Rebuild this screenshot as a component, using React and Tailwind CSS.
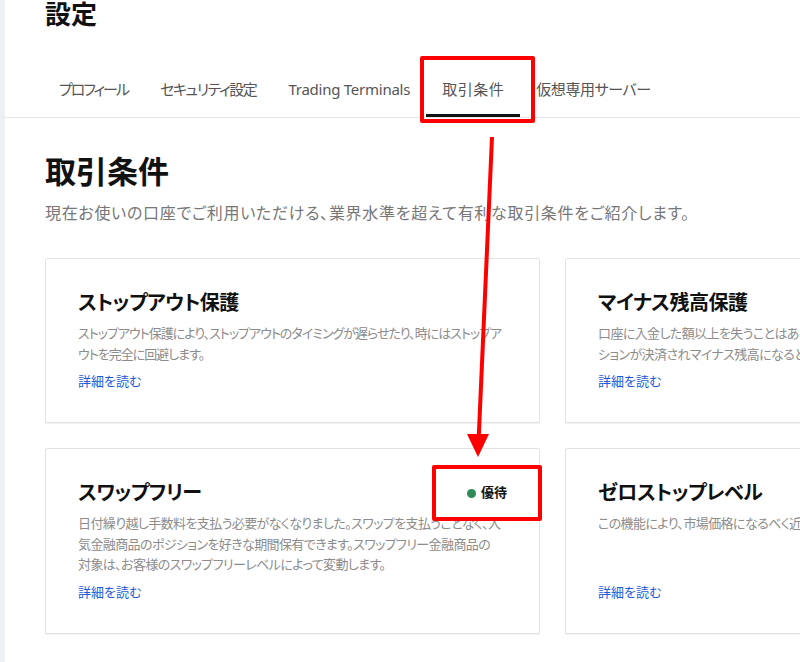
import React from "react";

const cards = [
  {
    title: "ストップアウト保護",
    desc: "ストップアウト保護により、ストップアウトのタイミングが遅らせたり、時にはストップアウトを完全に回避します。",
    track: "tracking-[-1px]",
  },
  {
    title: "マイナス残高保護",
    desc: "口座に入金した額以上を失うことはありません。相場の急変により、お客様のポジションが決済されマイナス残高になると、残高はゼロにリセットされます。",
  },
  {
    title: "スワップフリー",
    desc: (
      <>
        日付繰り越し手数料を支払う必要がなくなりました。スワップを支払うことなく、人気金融商品のポジションを好きな期間保有できます。スワップフリー金融商品の
        <span className="whitespace-nowrap">対象</span>
        は、お客様のスワップフリーレベルによって変動します。
      </>
    ),
    badge: true,
  },
  {
    title: "ゼロストップレベル",
    desc: "この機能により、市場価格になるべく近い価格で注文を出すことができます。",
  },
];

const tabs = [
  { t: "プロフィール", c: "tracking-[-2px]" },
  { t: "セキュリティ設定", c: "tracking-[-1.4px]" },
  { t: "Trading Terminals", c: "tracking-[-0.25px]" },
  { t: "取引条件", c: "tracking-[0.5px]" },
  { t: "仮想専用サーバー", c: "tracking-[-0.4px]" },
];

function Card({ title, desc, badge, track }) {
  return (
    <div className="flex flex-col rounded-[2px] border border-[#e2e2e2] bg-white px-[32px] pt-[30px] pb-[31px] shadow-[0_1px_1px_rgba(0,0,0,0.06)]">
      <div className="flex items-center justify-between">
        <h3 className="text-[20px] font-bold leading-[28px] text-[#111] tracking-[-0.5px]">{title}</h3>
        {badge && (
          <div className="flex items-center gap-[5px] text-[13px] font-bold text-[#111]">
            <span className="h-[9px] w-[9px] rounded-full bg-[#2e8b57]" />
            優待
          </div>
        )}
      </div>
      <p className={"mt-[6px] text-[13px] leading-[20.5px] text-[#8c8c8c] " + (track || "tracking-[-0.6px]")}>{desc}</p>
      <a className="mt-auto pt-[7px] text-[13px] leading-[20px] text-[#1d5ad8]">詳細を読む</a>
    </div>
  );
}

export default function App() {
  return (
    <div className="relative flex h-[662px] w-[800px] overflow-hidden bg-white font-['Noto_Sans','Noto_Sans_CJK_JP',sans-serif] [font-feature-settings:'palt']">
      <div className="w-[5px] shrink-0 bg-[#eef0f3]" />
      <div className="flex min-w-0 flex-1 flex-col">
        <div className="pl-[40px]">
          <h1 className="text-[26px] font-bold leading-[29px] text-[#111]">設定</h1>
        </div>
        <div className="mt-[47px] flex border-b border-[#e6e6e6] pl-[38px]">
          {tabs.map((x, i) => (
            <div
              key={x.t}
              className={
                "whitespace-nowrap px-[16px] pb-[12px] text-[15px] leading-[26px] text-[#555] " +
                x.c +
                " " +
                (i === 3 ? "border-b-[3px] border-[#111]" : "border-b-[3px] border-transparent")
              }
            >
              {x.t}
            </div>
          ))}
        </div>
        <div className="pl-[40px]">
          <h2 className="mt-[35px] text-[31px] font-bold leading-[36px] text-[#111]">取引条件</h2>
          <p className="mt-[12px] text-[16px] leading-[24px] text-[#777] tracking-[0.7px]">
            現在お使いの口座でご利用いただける、業界水準を超えて有利な取引条件をご紹介します。
          </p>
          <div className="mt-[33px] grid grid-cols-[495px_495px] gap-[25px]">
            {cards.map((c) => (
              <Card key={c.title} {...c} />
            ))}
          </div>
        </div>
      </div>

      {/* annotations */}
      <div className="pointer-events-none absolute left-[420px] top-[56px] h-[67px] w-[115px] rounded-[2px] border-[4px] border-[#ff0000]" />
      <div className="pointer-events-none absolute left-[432px] top-[465px] h-[56px] w-[110px] rounded-[2px] border-[4px] border-[#ff0000]" />
      <svg className="pointer-events-none absolute left-0 top-0" width="800" height="662">
        <line x1="492" y1="137" x2="478.7" y2="438" stroke="#ff0000" strokeWidth="4" />
        <polygon points="467,434 489,434 478,457" fill="#ff0000" />
      </svg>
    </div>
  );
}
